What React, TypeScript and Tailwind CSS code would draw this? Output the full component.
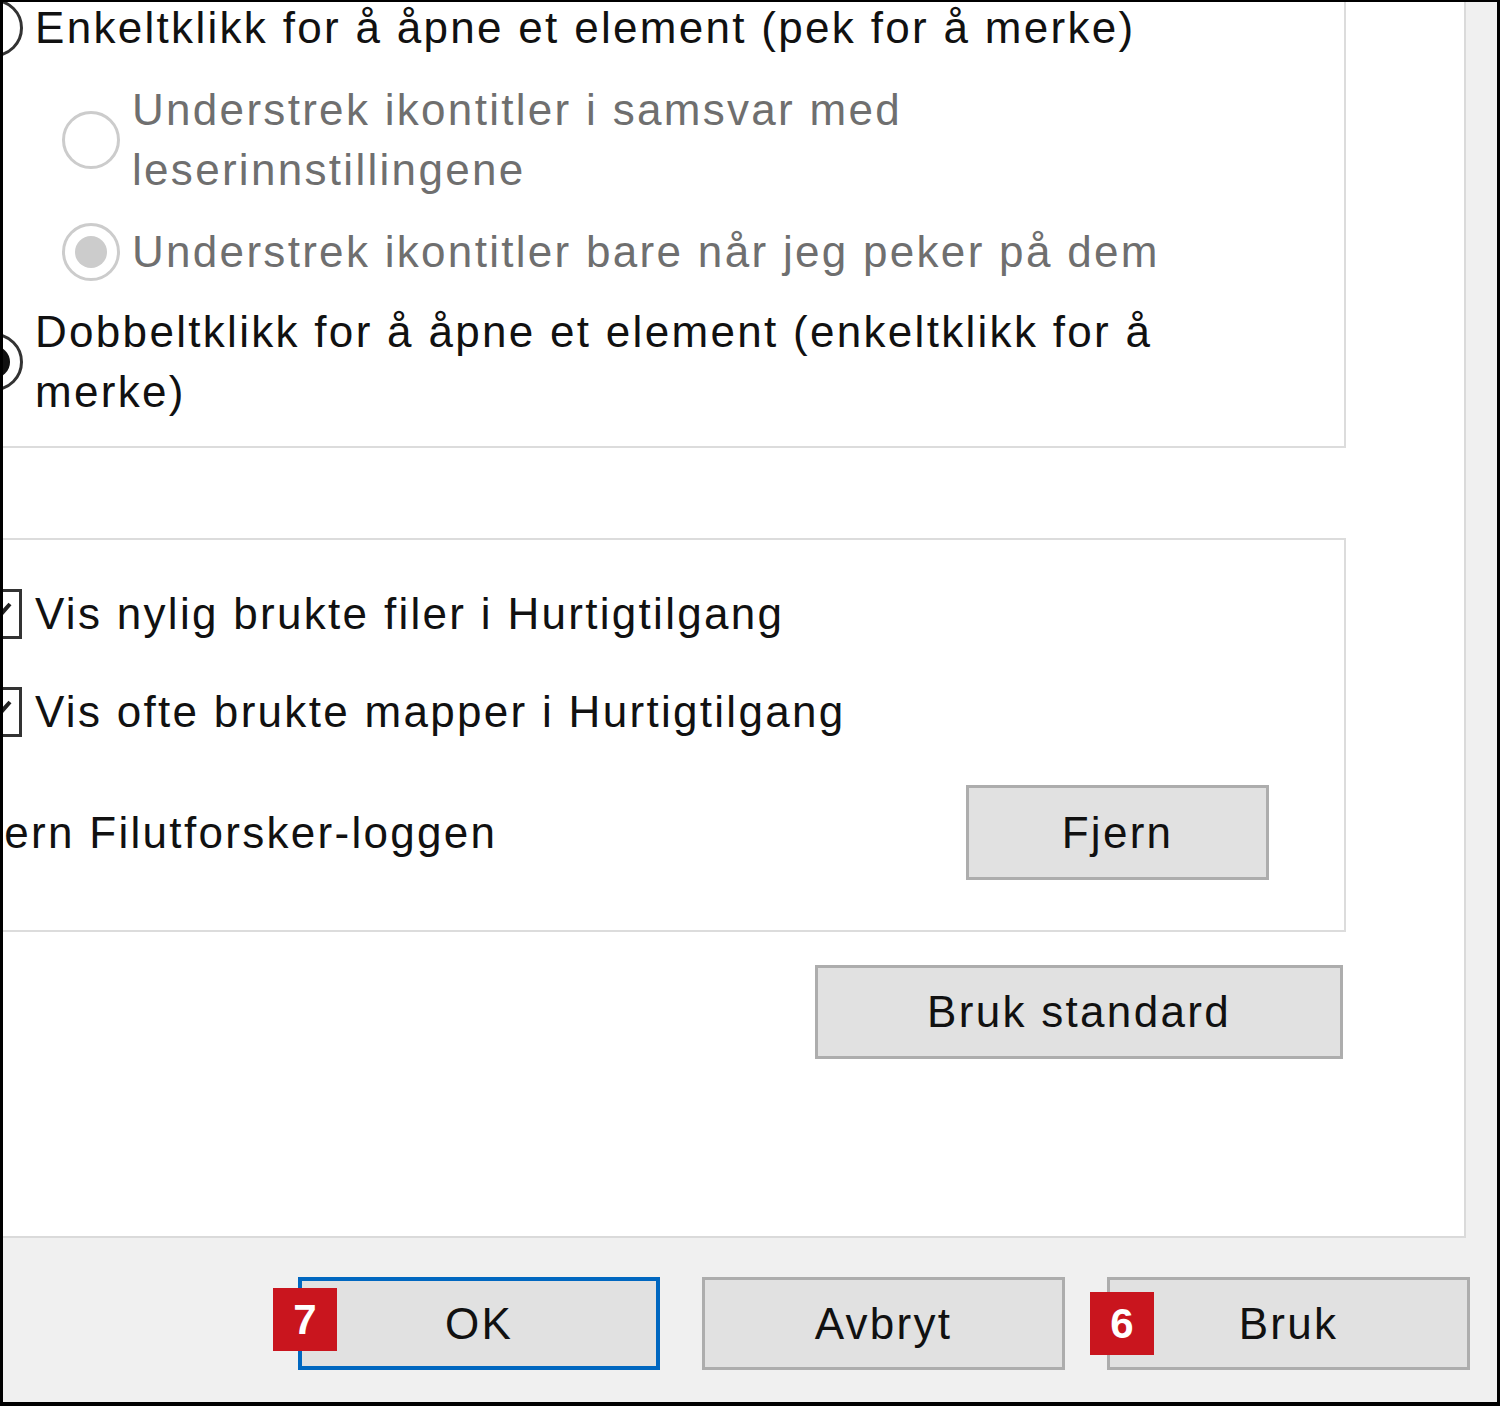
import React from 'react';

const font = "font-['Liberation_Sans',Arial,sans-serif]";

const Radio: React.FC<{ checked?: boolean; disabled?: boolean }> = ({ checked, disabled }) => (
  <div
    className={`w-[58px] h-[58px] shrink-0 rounded-full bg-white border-[3px] flex items-center justify-center ${
      disabled ? 'border-[#cccccc]' : 'border-[#333333]'
    }`}
  >
    {checked && (
      <div className={`w-[32px] h-[32px] rounded-full ${disabled ? 'bg-[#cccccc]' : 'bg-[#111111]'}`}></div>
    )}
  </div>
);

const Checkbox: React.FC = () => (
  <div className="w-[48px] h-[50px] shrink-0 border-[3px] border-[#333333] bg-white flex items-center justify-center">
    <svg width="36" height="36" viewBox="0 0 36 36">
      <path d="M6 18 L14 26 L30 8" stroke="#222" strokeWidth="4" fill="none" />
    </svg>
  </div>
);

const Badge: React.FC<{ n: string; className: string }> = ({ n, className }) => (
  <div
    className={`absolute w-[64px] h-[63px] bg-[#c9151e] text-white text-[42px] font-bold tracking-normal leading-[63px] text-center ${className}`}
  >
    {n}
  </div>
);

const WinButton: React.FC<{ children: React.ReactNode; className?: string; primary?: boolean }> = ({
  children,
  className = '',
  primary,
}) => (
  <div
    className={`relative flex items-center justify-center bg-[#e1e1e1] text-[44px] tracking-[2.3px] text-[#111] ${
      primary ? 'border-[4px] border-[#0067c0]' : 'border-[3px] border-[#adadad]'
    } ${className}`}
  >
    {children}
  </div>
);

export default function App() {
  return (
    <div
      className={`w-[1500px] h-[1406px] overflow-hidden bg-[#f0f0f0] border-black border-t-[2px] border-l-[3px] border-r-[3px] border-b-[4px] flex flex-col ${font}`}
    >
      {/* tab page */}
      <div className="h-[1236px] flex shrink-0">
        <div className="w-[1463px] h-full bg-white border-r-[2px] border-b-[2px] border-[#dadada] overflow-hidden">
          <div className="-ml-[63px] w-[1470px] tracking-[2.3px]">
            {/* Click behaviour group */}
            <div className="-mt-[22px] h-[468px] w-[1406px] border-[2px] border-[#dcdcdc] pl-[23px] text-[44px] leading-[60px] text-[#111]">
              <div className="mt-[16px] flex items-start gap-[12px]">
                <div className="mt-[1px]">
                  <Radio />
                </div>
                <span>Enkeltklikk for å åpne et element (pek for å merke)</span>
              </div>
              <div className="mt-[22px] ml-[97px] flex items-center gap-[12px] text-[#6f6f6f]">
                <Radio disabled />
                <span>
                  Understrek ikontitler i samsvar med
                  <br />
                  leserinnstillingene
                </span>
              </div>
              <div className="mt-[22px] ml-[97px] flex items-center gap-[12px] text-[#6f6f6f]">
                <Radio disabled checked />
                <span>Understrek ikontitler bare når jeg peker på dem</span>
              </div>
              <div className="mt-[20px] flex items-center gap-[12px]">
                <Radio checked />
                <span>
                  Dobbeltklikk for å åpne et element (enkeltklikk for å
                  <br />
                  merke)
                </span>
              </div>
            </div>

            {/* Privacy group */}
            <div className="mt-[90px] h-[394px] w-[1406px] border-[2px] border-[#dcdcdc] pl-[32px] text-[44px] leading-[60px] text-[#111]">
              <div className="mt-[44px] flex items-center gap-[13px]">
                <Checkbox />
                <span>Vis nylig brukte filer i Hurtigtilgang</span>
              </div>
              <div className="mt-[38px] flex items-center gap-[13px]">
                <Checkbox />
                <span>Vis ofte brukte mapper i Hurtigtilgang</span>
              </div>
              <div className="mt-[43px] -ml-[11px] flex items-center justify-between pr-[75px]">
                <span>Fjern Filutforsker-loggen</span>
                <WinButton className="w-[303px] h-[95px]">Fjern</WinButton>
              </div>
            </div>

            <div className="mt-[33px] w-[1403px] flex justify-end">
              <WinButton className="w-[528px] h-[94px]">Bruk standard</WinButton>
            </div>
          </div>
        </div>
        <div className="flex-1"></div>
      </div>

      {/* dialog footer */}
      <div className="flex-1 pt-[39px] pl-[295px] flex gap-[42px]">
        <WinButton primary className="w-[362px] h-[93px]">
          <Badge n="7" className="-left-[29px] top-[7px]" />
          OK
        </WinButton>
        <WinButton className="w-[363px] h-[93px]">Avbryt</WinButton>
        <WinButton className="w-[363px] h-[93px]">
          <Badge n="6" className="-left-[20px] top-[12px]" />
          Bruk
        </WinButton>
      </div>
    </div>
  );
}
